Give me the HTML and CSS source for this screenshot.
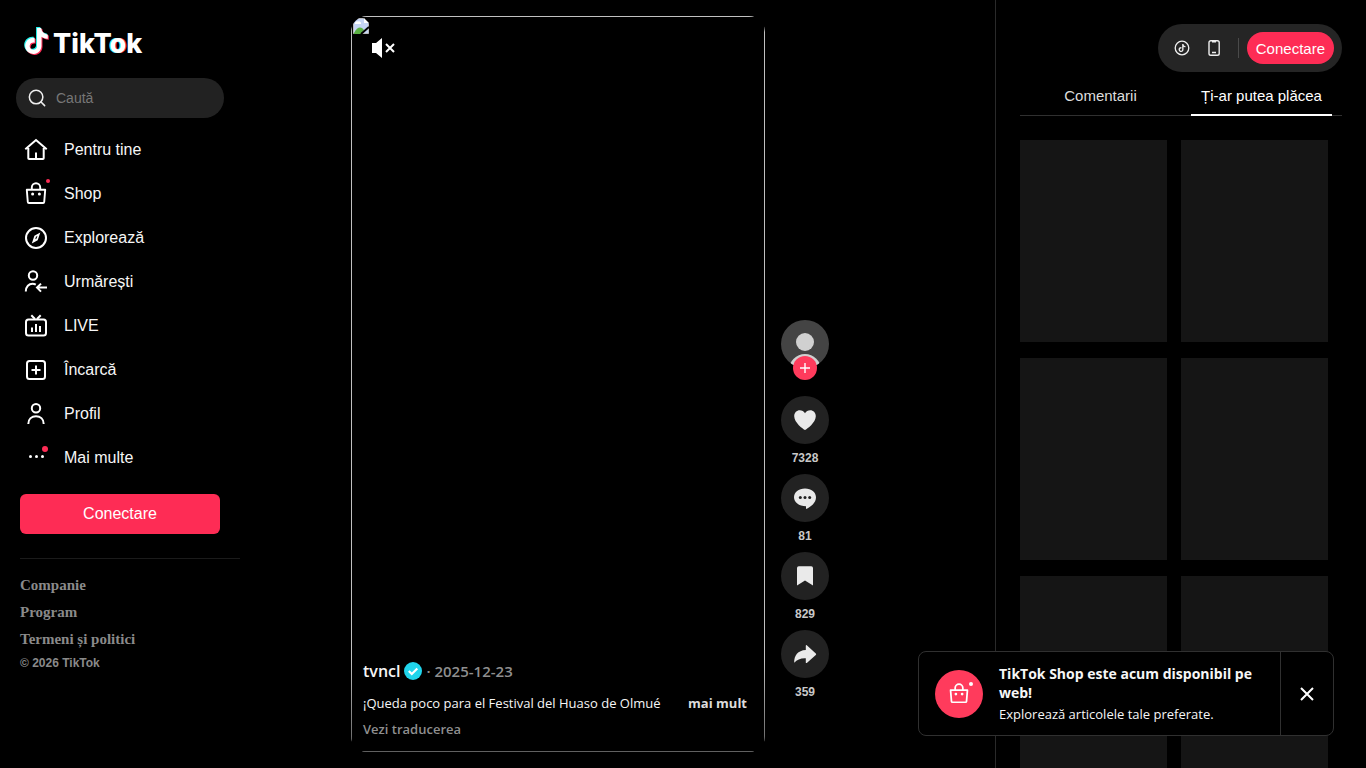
FILE: index.html
```html
<!DOCTYPE html>
<html lang="ro">
<head>
<meta charset="utf-8">
<meta name="viewport" content="width=device-width, initial-scale=1">
<title>TikTok</title>
<link rel="stylesheet" href="styles.css">
</head>
<body>
<svg class="defs" aria-hidden="true">
  <symbol id="note" viewBox="0 0 24 24"><path d="M12.525.02c1.31-.02 2.61-.01 3.91-.02.08 1.53.63 3.09 1.75 4.17 1.12 1.11 2.7 1.62 4.24 1.79v4.03c-1.44-.05-2.89-.35-4.2-.97-.57-.26-1.1-.59-1.62-.93-.01 2.92.01 5.84-.02 8.75-.08 1.4-.54 2.79-1.35 3.94-1.31 1.92-3.58 3.17-5.91 3.21-1.43.08-2.86-.31-4.08-1.03-2.02-1.19-3.44-3.37-3.65-5.71-.02-.5-.03-1-.01-1.49.18-1.9 1.12-3.72 2.58-4.96 1.66-1.44 3.98-2.13 6.15-1.72.02 1.48-.04 2.96-.04 4.44-.99-.32-2.15-.23-3.02.37-.63.41-1.11 1.04-1.36 1.75-.21.51-.15 1.07-.14 1.61.24 1.64 1.82 3.02 3.5 2.87 1.12-.01 2.19-.66 2.77-1.61.19-.33.4-.67.41-1.06.1-1.79.06-3.57.07-5.36.01-4.03-.01-8.05.02-12.07z"/></symbol>
  <symbol id="bag" viewBox="0 0 24 24"><g fill="none" stroke="currentColor" stroke-width="1.900" stroke-linejoin="round"><path d="M2.800 7.800h18.400l-1 12.200q-.1 1-1.100 1H4.900q-1 0-1.100-1z"/><path d="M7.800 7.800V5.500a4.200 4.200 0 0 1 8.400 0v2.300"/></g><g fill="currentColor" stroke="none"><circle cx="8.600" cy="12" r="1.500"/><circle cx="15.400" cy="12" r="1.500"/></g></symbol>
</svg>
<div class="app">
  <aside class="sidebar">
    <a class="logo" href="#" aria-label="TikTok">
      <svg class="logo-mark" viewBox="0 0 26 30">
        <use href="#note" x="-1" y="0" width="26" height="28" fill="#25f4ee"/>
        <use href="#note" x="1" y="2" width="26" height="28" fill="#fe2c55"/>
        <use href="#note" x="0" y="1" width="26" height="28" fill="#fff"/>
      </svg>
      <span class="wordmark">TikT<span class="wordmark-o">o</span>k</span>
    </a>
    <label class="search">
      <svg class="search-icon" viewBox="0 0 20 20" fill="none" stroke="#eee" stroke-width="1.700" stroke-linecap="round"><circle cx="9" cy="9" r="7.500"/><path d="M14.500 14.500l4 4"/></svg>
      <input class="search-input" type="search" placeholder="Caută" aria-label="Caută">
    </label>
    <nav class="nav">
      <a class="nav-item" href="#"><svg class="icon" viewBox="0 0 24 24"><path d="M1.300 11.300L12 2l10.700 9.300M4.300 10v10.200q0 .8.800.8h13.800q.8 0 .8-.8V10M12 14.500V21"/></svg>Pentru tine</a>
      <a class="nav-item" href="#"><svg class="icon"><use href="#bag"/></svg><i class="dot dot-small"></i>Shop</a>
      <a class="nav-item" href="#"><svg class="icon" viewBox="0 0 24 24"><circle cx="12" cy="12" r="10"/><path fill="#fff" fill-rule="evenodd" stroke="none" d="M16.300 6.500L13.700 14.300 7.800 17.600 10.400 9.700zM12 10.800l-.8 2.400 1.400-.8.800-2.400z"/></svg>Explorează</a>
      <a class="nav-item" href="#"><svg class="icon" viewBox="0 0 24 24"><circle cx="9" cy="5.500" r="4.200"/><path d="M1.800 21.500c0-5 3.200-7.700 6.700-7.700 1.300 0 2.300.3 3.300.9M23 17.600H13.500M17 13.600l-4 4 4 4"/></svg>Urmărești</a>
      <a class="nav-item" href="#"><svg class="icon" viewBox="0 0 24 24"><rect x="2" y="5.500" width="20" height="16" rx="2.500"/><path d="M7.300 1.300L11 5M16.700 1.300L13 5M8 13.500v4.500M12 10v8M16 12v6"/></svg>LIVE</a>
      <a class="nav-item" href="#"><svg class="icon" viewBox="0 0 24 24"><rect x="3" y="3" width="18" height="18" rx="2.500"/><path d="M12 7.500v9M7.500 12h9"/></svg>Încarcă</a>
      <a class="nav-item" href="#"><svg class="icon" viewBox="0 0 24 24"><circle cx="12" cy="6.300" r="4.200"/><path d="M4.300 22c0-5 3.500-7.700 7.700-7.700s7.700 2.700 7.700 7.700"/></svg>Profil</a>
      <a class="nav-item" href="#"><svg class="icon" viewBox="0 0 24 24"><g fill="#fff" stroke="none"><circle cx="6.500" cy="10.500" r="1.500"/><circle cx="12.500" cy="10.500" r="1.500"/><circle cx="18.500" cy="10.500" r="1.500"/></g></svg><i class="dot"></i>Mai multe</a>
    </nav>
    <button class="login" type="button">Conectare</button>
    <footer class="footer">
      <a href="#">Companie</a>
      <a href="#">Program</a>
      <a href="#">Termeni și politici</a>
      <small>© 2026 TikTok</small>
    </footer>
  </aside>

  <main class="feed">
    <article class="video">
      <div class="poster">
        <svg class="broken" viewBox="0 0 16 16"><path fill="#c5d5f5" stroke="#bbb" d="M.5.500h10l5 5v10H.500z"/><path fill="#fff" d="M2 5a2 2 0 0 1 3-1.500A2 2 0 0 1 8 5v1H2zM11 0v5h5z"/><path fill="#5bb043" d="M1 15q5-9 10-3l-3 4H1z"/><path stroke="#000" stroke-width="2" d="M8 16l8-7"/></svg>
      </div>
      <button class="mute" type="button" aria-label="Activează sunetul"><svg viewBox="0 0 24 22"><path fill="#fff" d="M1 6h4l6-5v20l-6-5H1z"/><path stroke="#fff" stroke-width="2" d="M15 7l8 8M23 7l-8 8"/></svg></button>
      <div class="caption">
        <div class="author">
          <a class="name" href="#">tvncl</a>
          <svg class="verified" viewBox="0 0 18 18"><circle cx="9" cy="9" r="9" fill="#20d5ec"/><path d="M4.800 9l3 3 5.500-5.500" fill="none" stroke="#fff" stroke-width="2.200"/></svg>
          <span class="date">· 2025-12-23</span>
        </div>
        <div class="description"><p>¡Queda poco para el Festival del Huaso de Olmué</p><button class="more" type="button">mai mult</button></div>
        <button class="translate" type="button">Vezi traducerea</button>
      </div>
    </article>
    <div class="actions">
      <div class="profile">
        <svg class="avatar" viewBox="0 0 48 48"><defs><clipPath id="round"><circle cx="24" cy="24" r="24"/></clipPath></defs><g clip-path="url(#round)"><path fill="#444" d="M0 0h48v48H0z"/><circle cx="24" cy="22" r="9" fill="#d0d0d0"/><circle cx="24" cy="50" r="16" fill="#d0d0d0"/></g></svg>
        <button class="follow" type="button" aria-label="Urmărește"><svg viewBox="0 0 12 12"><path stroke="#fff" stroke-width="1.400" d="M6 1v10M1 6h10"/></svg></button>
      </div>
      <button class="action" type="button"><span class="disc"><svg viewBox="0 0 24 24"><path d="M12 22C10 21 1.200 14.500 1.200 8.200 1.200 4.500 3.800 2.300 6.700 2.300c2.300 0 4.200 1.200 5.300 3 1.100-1.800 3-3 5.300-3 2.900 0 5.500 2.200 5.500 5.900C22.800 14.500 14 21 12 22z"/></svg></span><span class="count">7328</span></button>
      <button class="action" type="button"><span class="disc"><svg viewBox="0 0 24 24"><path d="M12 2.500c6.400 0 11 3.900 11 8.800 0 5.500-5 9.800-10 11.700v-2.800C5.800 20.200 1 16.300 1 11.300c0-4.900 4.600-8.800 11-8.800z"/><g fill="#222"><circle cx="7.300" cy="11.500" r="1.500"/><circle cx="12" cy="11.500" r="1.500"/><circle cx="16.700" cy="11.500" r="1.500"/></g></svg></span><span class="count">81</span></button>
      <button class="action" type="button"><span class="disc"><svg viewBox="0 0 24 24"><path d="M4 4q0-1.800 1.800-1.800h12.400Q20 2.200 20 4v17.500l-8-5-8 5z"/></svg></span><span class="count">829</span></button>
      <button class="action" type="button"><span class="disc"><svg viewBox="0 0 24 24"><path d="M12.800 3.700q.2-1 1-.4l9 8.200q.8.700 0 1.400l-9 8q-1 .6-1-.5v-4.200C7.500 16 4.200 17.500 1.200 20.800 1 13.500 4.800 8.300 12.800 7.900z"/></svg></span><span class="count">359</span></button>
    </div>
  </main>

  <section class="panel">
    <div class="toolbar">
      <button class="tool" type="button" aria-label="Monede"><svg viewBox="0 0 16 16"><circle cx="8" cy="8" r="6.800" fill="none" stroke="#eee" stroke-width="1.300"/><use href="#note" x="4" y="4" width="8" height="8" fill="#eee"/></svg></button>
      <button class="tool" type="button" aria-label="Aplicație"><svg viewBox="0 0 16 16" fill="none" stroke="#eee" stroke-width="1.400"><rect x="3" y=".8" width="10.200" height="14.400" rx="1.800"/><path d="M6 1.800h4M6 12.500h4"/></svg></button>
      <span class="separator"></span>
      <button class="login-pill" type="button">Conectare</button>
    </div>
    <div class="tabs" role="tablist">
      <button class="tab" type="button" role="tab">Comentarii</button>
      <button class="tab active" type="button" role="tab" aria-selected="true">Ți-ar putea plăcea</button>
    </div>
    <div class="cards">
      <div class="card"></div><div class="card"></div>
      <div class="card"></div><div class="card"></div>
      <div class="card"></div><div class="card"></div>
    </div>
  </section>
</div>

<div class="toast" role="status">
  <div class="toast-body">
    <span class="toast-icon"><svg viewBox="0 0 24 24"><use href="#bag"/></svg><i class="spark"></i></span>
    <div class="toast-text"><strong>TikTok Shop este acum disponibil pe web!</strong><p>Explorează articolele tale preferate.</p></div>
  </div>
  <button class="toast-close" type="button" aria-label="Închide"><svg viewBox="0 0 14 14"><path stroke="#fff" stroke-width="2" d="M1 1l12 12M13 1L1 13"/></svg></button>
</div>
</body>
</html>
```
FILE: styles.css
```css
* { box-sizing: border-box; }
body {
  margin: 0;
  background: #000;
  color: #f6f6f6;
  font-family: "Liberation Sans", Arial, sans-serif;
  font-size: 16px;
  overflow: hidden;
}
button, input { font: inherit; color: inherit; background: none; border: 0; padding: 0; margin: 0; }
button { cursor: pointer; }
a { color: inherit; text-decoration: none; }
p { margin: 0; }
svg { display: block; flex: none; }
.defs { display: none; }

.app { display: flex; height: 100vh; }

/* Sidebar */
.sidebar { width: 240px; flex: none; padding: 26px 0 0 16px; }
.logo { display: flex; align-items: center; height: 30px; padding-left: 7px; gap: 3px; }
.logo-mark { width: 27px; height: 30px; }
.wordmark { color: #fff; font: 800 27px/30px Inter, sans-serif; padding-top: 6px; }
.wordmark-o { text-shadow: -1px 0 #25f4ee, 1px 0 #fe2c55; }
.search {
  display: flex; align-items: center; gap: 10px;
  height: 40px; margin: 22px 16px 12px 0; padding: 0 12px;
  border-radius: 20px; background: #222;
}
.search-icon { width: 18px; height: 18px; }
.search-input { flex: 1; min-width: 0; font-size: 14px; outline: 0; }
.search-input::placeholder { color: #777; opacity: 1; }
.nav { display: flex; flex-direction: column; gap: 4px; }
.nav-item { position: relative; display: flex; align-items: center; gap: 16px; height: 40px; padding-left: 8px; }
.icon { width: 24px; height: 24px; fill: none; stroke: #fff; stroke-width: 2; color: #fff; }
.dot { position: absolute; left: 26px; top: 8px; width: 6px; height: 6px; border-radius: 50%; background: #fe2c55; }
.dot-small { left: 30px; top: 5px; width: 4px; height: 4px; }
.login {
  display: block; width: 200px; height: 40px; margin: 16px 0 24px 4px;
  border-radius: 6px; background: #fe2c55; color: #fff;
}
.footer {
  display: flex; flex-direction: column; margin-left: 4px; padding-top: 13px;
  border-top: 1px solid #1b1b1b; color: #8a8a8a;
  font: 700 15px/27px "Liberation Serif", "Times New Roman", serif;
}
.footer small { font: 700 12px/20px "Liberation Sans", Arial, sans-serif; }

/* Feed */
.feed { flex: 1; min-width: 0; display: flex; justify-content: center; gap: 16px; padding: 16px 55px 16px 0; }
.video { position: relative; height: 100%; aspect-ratio: 9 / 16; border-radius: 16px; overflow: hidden; }
.poster { height: 100%; border: 1px solid #c0c0c0; }
.broken { width: 18px; height: 18px; padding: 1px; }
.mute { position: absolute; left: 20px; top: 21px; }
.mute svg { width: 24px; height: 22px; }
.caption {
  position: absolute; left: 0; right: 0; bottom: 0; padding: 0 18px 11px 12px;
  background: linear-gradient(transparent, rgba(0, 0, 0, .5));
  font-family: "Open Sans", "Noto Sans", sans-serif;
}
.author { display: flex; align-items: center; gap: 4px; height: 24px; margin-bottom: 10px; }
.name { font-size: 16px; font-weight: 600; }
.verified { width: 18px; height: 18px; }
.date { font-size: 15px; font-weight: 600; color: #8f8f8f; }
.description { display: flex; align-items: center; justify-content: space-between; gap: 8px; height: 20px; font-size: 13px; white-space: nowrap; margin-bottom: 4px; }
.more { font-weight: 700; color: #ddd; }
.translate { display: block; height: 24px; font-size: 13px; font-weight: 600; color: #8f8f8f; }

.actions { display: flex; flex-direction: column; justify-content: flex-end; width: 48px; padding-bottom: 44px; }
.profile { position: relative; margin-bottom: 28px; }
.avatar { width: 48px; height: 48px; }
.follow {
  position: absolute; left: 12px; bottom: -12px; width: 24px; height: 24px;
  display: flex; align-items: center; justify-content: center;
  border-radius: 50%; background: #ff3b5c;
}
.follow svg { width: 12px; height: 12px; }
.disc { display: flex; align-items: center; justify-content: center; height: 48px; border-radius: 50%; background: #222; }
.disc svg { width: 24px; height: 24px; fill: #eaeaea; }
.count { display: block; padding: 6px 0 8px; font-size: 12px; line-height: 16px; font-weight: 700; color: #c8c8c8; }

/* Right panel */
.panel { width: 371px; flex: none; padding: 24px 24px 0; border-left: 1px solid #2a2a2a; overflow: hidden; }
.toolbar { display: flex; align-items: center; width: max-content; height: 48px; margin-left: auto; padding: 0 8px; border-radius: 24px; background: #252525; }
.tool { display: flex; align-items: center; justify-content: center; width: 32px; height: 32px; }
.tool svg { width: 16px; height: 16px; }
.separator { width: 1px; height: 20px; margin: 0 8px; background: #4a4a4a; }
.login-pill { height: 32px; padding: 0 9px; border-radius: 16px; background: #fe2c55; color: #fff; font-size: 15px; }
.tabs { display: flex; margin: 4px 0 24px; border-bottom: 1px solid #303030; height: 40px; font-size: 15px; }
.tab { position: relative; flex: 1; color: #ddd; }
.tab.active { color: #fff; }
.tab.active::after { content: ""; position: absolute; left: 10px; right: 10px; bottom: -1px; height: 2px; background: #fff; }
.cards { display: grid; grid-template-columns: 1fr 1fr; gap: 16px 14px; padding-right: 14px; }
.card { aspect-ratio: 147 / 202; background: #151515; }

/* Toast */
.toast {
  position: fixed; right: 32px; bottom: 32px; width: 416px; display: flex;
  border: 1px solid #303030; border-radius: 8px; background: #000;
  font-family: "Open Sans", "Noto Sans", sans-serif;
}
.toast-body { flex: 1; display: flex; align-items: center; gap: 16px; padding: 12px 16px; }
.toast-icon { position: relative; flex: none; display: flex; align-items: center; justify-content: center; width: 48px; height: 48px; border-radius: 50%; background: #ff3b5c; color: #fff; }
.toast-icon svg { width: 22px; height: 22px; }
.spark { position: absolute; right: 10px; top: 12px; width: 4px; height: 4px; border-radius: 50%; background: #fff; }
.toast-text strong { display: block; font-size: 14px; line-height: 19px; font-weight: 700; }
.toast-text p { font-size: 13px; line-height: 18px; margin-top: 3px; }
.toast-close { width: 53px; display: flex; align-items: center; justify-content: center; border-left: 1px solid #303030; }
.toast-close svg { width: 14px; height: 14px; }
```
